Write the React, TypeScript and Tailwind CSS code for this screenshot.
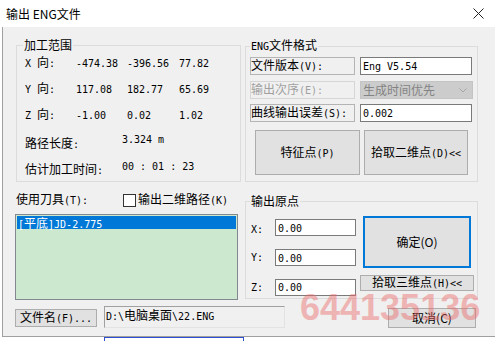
import type { ReactNode } from 'react'

// splits a label into ascii / cjk runs so the ascii part gets the narrow mono face (like SimSun)
function S({ t, className = '' }: { t: string; className?: string }) {
  const parts = t.split(/([\x20-\x7e]+)/).filter(Boolean)
  return (
    <span className={`whitespace-pre ${className}`}>
      {parts.map((p, i) =>
        /^[\x20-\x7e]+$/.test(p) ? (
          <span key={i} className="font-['DejaVu_Sans_Mono',monospace] text-[10px]">{p}</span>
        ) : (
          <span key={i}>{p}</span>
        )
      )}
    </span>
  )
}

function Group({ title, legend, className, children }: { title: string; legend: string; className: string; children: ReactNode }) {
  return (
    <fieldset className={`border border-[#dcdcdc] ${className}`}>
      <legend className={`px-[1px] leading-[16px] ${legend}`}>
        <S t={title} />
      </legend>
      {children}
    </fieldset>
  )
}

function Btn({ label, className }: { label: string; className: string }) {
  return (
    <div className={`flex items-center justify-center bg-[#e1e1e1] border border-[#adadad] ${className}`}>
      <S t={label} />
    </div>
  )
}

function Field({ value, className }: { value: string; className: string }) {
  return (
    <div className={`flex items-center bg-white border border-[#7a7a7a] pl-[2px] ${className}`}>
      <S t={value} />
    </div>
  )
}

const RANGE = [
  { label: 'X 向:', v: ['-474.38', '-396.56', '77.82'] },
  { label: 'Y 向:', v: ['117.08', '182.77', '65.69'] },
  { label: 'Z 向:', v: ['-1.00', '0.02', '1.02'] },
]

export default function App() {
  return (
    <div className="relative w-[495px] h-[341px] overflow-hidden bg-white text-black text-[12px] leading-[16px] font-['Noto_Sans_CJK_SC',sans-serif]">
      {/* title bar */}
      <div className="flex items-center h-[27px] pl-[6px]">
        <span>输出 ENG文件</span>
        <svg className="ml-auto mr-[11px]" width="11" height="11" viewBox="0 0 11 11">
          <path d="M0.5 0.5 L10.5 10.5 M10.5 0.5 L0.5 10.5" stroke="#222" strokeWidth="1" fill="none" />
        </svg>
      </div>

      {/* dialog body */}
      <div className="ml-[2px] h-[310px] border-l border-b border-[#a0a0a0] bg-[#f0f0f0] pt-[10px]">
        <div className="flex pl-[13px]">
          {/* left column */}
          <div className="flex flex-col w-[225px]">
            <Group title="加工范围" legend="ml-[6px]" className="h-[145px]">
              <div className="flex flex-col gap-[6px] pl-[8px]">
                {RANGE.map(r => (
                  <div key={r.label} className="flex items-center h-[20px]">
                    <S t={r.label} className="w-[51px]" />
                    <S t={r.v[0]} className="w-[51px]" />
                    <S t={r.v[1]} className="w-[52px]" />
                    <S t={r.v[2]} />
                  </div>
                ))}
                <div className="flex items-center h-[20px] mt-[1px]">
                  <S t="路径长度:" className="w-[97px] mt-[4px]" />
                  <S t="3.324 m" className="mb-[6px]" />
                </div>
                <div className="flex items-center h-[20px]">
                  <S t="估计加工时间:" className="w-[97px] mt-[4px]" />
                  <S t="00 : 01 : 23" className="mb-[4px]" />
                </div>
              </div>
            </Group>

            <div className="flex items-center h-[14px] mt-[11px]">
              <S t="使用刀具(T):" className="w-[107px]" />
              <div className="w-[13px] h-[13px] bg-white border border-[#333333]" />
              <S t="输出二维路径(K)" className="ml-[2px]" />
            </div>

            <div className="mt-[7px] -ml-[1px] w-[223px] h-[86px] border border-[#828790] bg-[#cce8cf] p-[1px]">
              <div className="h-[13px] bg-[#0078d7] text-white leading-[13px] pl-[1px]">
                <S t="[平底]JD-2.775" />
              </div>
            </div>
          </div>

          {/* right column */}
          <div className="flex flex-col ml-[4px] w-[233px]">
            <Group title="ENG文件格式" legend="ml-[4px]" className="h-[145px]">
              <div className="flex flex-col mt-[2px] pl-[4px]">
                <div className="flex h-[18px]">
                  <div className="w-[105px] border border-[#b4b4b4] flex items-center">
                    <S t="文件版本(V):" />
                  </div>
                  <Field value="Eng V5.54" className="ml-[5px] w-[112px]" />
                </div>
                <div className="flex h-[18px] mt-[6px]">
                  <div className="w-[105px] border border-[#d6d6d6] flex items-center text-[#a0a0a0]">
                    <S t="输出次序(E):" />
                  </div>
                  <div className="ml-[5px] w-[113px] flex items-center bg-[#cccccc] border border-[#c4c4c4] pl-[2px] text-[#838383]">
                    <span>生成时间优先</span>
                    <svg className="ml-auto mr-[5px]" width="8" height="5" viewBox="0 0 8 5">
                      <path d="M0.5 0.5 L4 4 L7.5 0.5" stroke="#a6a6a6" fill="none" />
                    </svg>
                  </div>
                </div>
                <div className="flex h-[18px] mt-[5px]">
                  <div className="w-[105px] border border-[#b4b4b4] flex items-center">
                    <S t="曲线输出误差(S):" />
                  </div>
                  <Field value="0.002" className="ml-[5px] w-[112px]" />
                </div>
                <div className="flex gap-[4px] mt-[8px] pl-[5px]">
                  <Btn label="特征点(P)" className="w-[105px] h-[45px]" />
                  <Btn label="拾取二维点(D)<<" className="w-[104px] h-[45px]" />
                </div>
              </div>
            </Group>

            <Group title="输出原点" legend="ml-[4px]" className="h-[106px] mt-[11px]">
              <div className="flex pl-[5px]">
                <div className="flex flex-col">
                  <div className="flex items-center mt-[8px]">
                    <S t="X:" className="w-[24px] mt-[3px]" />
                    <Field value="0.00" className="w-[81px] h-[17px]" />
                  </div>
                  <div className="flex items-center mt-[11px]">
                    <S t="Y:" className="w-[24px] -mt-[2px]" />
                    <Field value="0.00" className="w-[81px] h-[17px]" />
                  </div>
                  <div className="flex items-center mt-[12px]">
                    <S t="Z:" className="w-[24px]" />
                    <Field value="0.00" className="w-[81px] h-[17px]" />
                  </div>
                </div>
                <div className="flex flex-col items-start ml-[7px]">
                  <div className="mt-[7px] w-[108px] h-[52px] flex items-center justify-center bg-[#e1e1e1] border-2 border-[#0078d7]">
                    <span>确定(O)</span>
                  </div>
                  <Btn label="拾取三维点(H)<<" className="-ml-[3px] mt-[7px] w-[114px] h-[16px]" />
                </div>
              </div>
            </Group>
          </div>
        </div>

        {/* bottom row */}
        <div className="flex items-start h-[22px] mt-[6px] pl-[12px]">
          <Btn label="文件名(F)..." className="mt-[3px] w-[82px] h-[18px]" />
          <div className="ml-[7px] w-[181px] h-[22px] border border-t-[#a0a0a0] border-l-[#a0a0a0] border-b-[#e3e3e3] border-r-[#e3e3e3] pl-[1px]">
            <S t="D:\电脑桌面\22.ENG" />
          </div>
          <div className="ml-[103px] mt-[2px] w-[88px] h-[20px] flex items-center justify-center bg-[#e1e1e1] border border-[#adadad]">
            <span>取消(C)</span>
          </div>
        </div>
      </div>

      <div className="ml-[104px] w-[140px] h-[4px] border border-b-0 border-[#2f4fd0]" />

      {/* watermark */}
      <div className="absolute left-[300px] top-[290px] font-['Liberation_Sans',sans-serif] font-bold text-[36px] leading-none text-[#ec6a6a] opacity-45 pointer-events-none">
        644135136
      </div>
    </div>
  )
}
